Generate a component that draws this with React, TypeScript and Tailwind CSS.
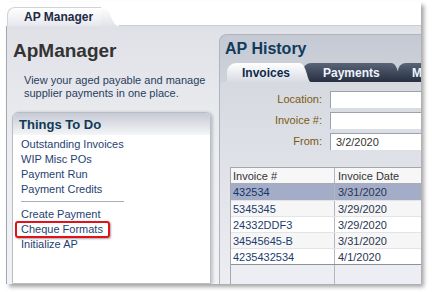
import React from "react";

const todo1 = ["Outstanding Invoices", "WIP Misc POs", "Payment Run", "Payment Credits"];

const invoices = [
  { no: "432534", date: "3/31/2020", selected: true },
  { no: "5345345", date: "3/29/2020", alt: true },
  { no: "24332DDF3", date: "3/29/2020" },
  { no: "34545645-B", date: "3/31/2020", alt: true },
  { no: "4235432534", date: "4/1/2020" },
];

function Curve({ id, from, to, w = 16 }: { id: string; from: string; to: string; w?: number }) {
  return (
    <svg width={w} height="19" viewBox={`0 0 ${w} 19`} className="block shrink-0">
      <defs>
        <linearGradient id={id} x1="0" y1="0" x2="0" y2="1">
          <stop offset="0" stopColor={from} />
          <stop offset="1" stopColor={to} />
        </linearGradient>
      </defs>
      <path d={`M0 0 L2 0 C10 0 10 19 ${w} 19 L0 19 Z`} fill={`url(#${id})`} />
    </svg>
  );
}

export default function App() {
  return (
    <div
      className="w-[432px] h-[292px] bg-white overflow-hidden pl-[6px] pt-[2px]"
      style={{ fontFamily: '"Liberation Sans", Arial, sans-serif' }}
    >
      <div className="w-[415px] h-[282px] flex flex-col bg-white shadow-[3px_3px_4px_rgba(0,0,0,0.35)] overflow-hidden">
        {/* top tab bar */}
        <div className="h-[24px] flex items-end shrink-0 pl-px">
          <div className="h-[19px] w-[94px] rounded-tl-[8px] bg-gradient-to-b from-white to-[#e6e8ed] border-t border-l border-[#d0d3da] flex items-center pl-[16px] text-[12px] font-bold text-[#1c2a44]">
            AP Manager
          </div>
          <Curve id="tabA" from="#ffffff" to="#e1e3e9" w={18} />
          <div className="flex-1 h-full border-b border-[#c9ccd3]" />
        </div>

        {/* main area */}
        <div className="flex-1 flex border-l border-[#a3a7b0] bg-gradient-to-b from-[#dfe1e7] via-[#eceef1] to-[#f1f2f5] min-h-0">
          {/* left panel */}
          <div className="w-[204px] shrink-0 flex flex-col pl-[5px] pt-[14px]">
            <h1 className="text-[19px] leading-[22px] font-bold text-[#333] pl-[1px]">ApManager</h1>
            <p className="mt-[12px] pl-[12px] text-[11px] leading-[13px] text-[#28405f]">
              View your aged payable and manage
              <br />
              supplier payments in one place.
            </p>
            <div className="mt-[12px] flex-1 flex flex-col rounded-t-[6px] border border-[#b9bdc6] bg-white shadow-[2px_0_3px_rgba(0,0,0,0.18)] overflow-hidden">
              <div className="h-[22px] pt-[1px] bg-gradient-to-b from-[#c6cad4] to-[#f5f6f8] pl-[6px] text-[13px] font-bold text-[#0e3a56] flex items-center">
                Things To Do
              </div>
              <div className="pl-[8px] pt-[2px] text-[11px] leading-[15px] text-[#1f3f72]">
                {todo1.map((t) => (
                  <div key={t}>{t}</div>
                ))}
                <div className="w-[103px] h-px bg-[#a9adb8] mt-[4px] mb-[5px]" />
                <div>Create Payment</div>
                <div className="relative">
                  Cheque Formats
                  <div className="absolute left-[-6px] top-[-1px] w-[95px] h-[17px] border-2 border-[#e2121a] rounded-[3px] shadow-[1px_1px_2px_rgba(0,0,0,0.35)]" />
                </div>
                <div>Initialize AP</div>
              </div>
            </div>
          </div>

          {/* right panel */}
          <div className="ml-[8px] mt-[8px] flex-1 min-w-0 flex flex-col rounded-tl-[8px] border-l border-t border-[#b0b4bd] bg-gradient-to-b from-[#c5c9d3] via-[#dfe2e8] to-[#eceef2] overflow-hidden">
            <h2 className="pl-[5px] pt-[4px] text-[16px] leading-[20px] font-bold text-[#103b5b]">AP History</h2>
            <div className="mt-[4px] pl-[7px] flex items-end h-[19px]">
              <div className="relative z-10 h-[19px] w-[70px] shrink-0 rounded-tl-[9px] bg-gradient-to-b from-white to-[#d8dbe2] flex items-center pl-[15px] text-[12px] font-bold text-[#0f2a4b]">
                Invoices
              </div>
              <div className="relative z-10">
                <Curve id="tabB" from="#ffffff" to="#d8dbe2" w={14} />
              </div>
              <div className="h-[19px] w-[86px] shrink-0 -ml-[8px] rounded-tl-[8px] bg-gradient-to-b from-[#5a6478] to-[#273040] flex items-center pl-[20px] text-[12px] font-bold text-[#eef3ff]">
                Payments
              </div>
              <Curve id="tabD" from="#5a6478" to="#273040" w={12} />
              <div className="h-[19px] flex-1 -ml-[3px] rounded-tl-[8px] bg-gradient-to-b from-[#5a6478] to-[#273040] text-[12px] font-bold text-[#eef3ff] pl-[14px] flex items-center overflow-hidden whitespace-nowrap">
                Misc
              </div>
            </div>

            <div className="bg-gradient-to-b from-[#d6d9e0] to-[#eceef2] pt-[7px] flex-1 flex flex-col">
              {[
                ["Location:", ""],
                ["Invoice #:", ""],
                ["From:", "3/2/2020"],
              ].map(([label, val]) => (
                <div key={label} className="flex items-center h-[20px] mb-px">
                  <div className="w-[110px] shrink-0 text-right text-[11px] text-[#7b5a12] pr-[8px]">{label}</div>
                  <div className="flex-1 h-[17px] bg-white border-t border-l border-[#9ca1ab] pl-[5px] text-[11px] leading-[16px] text-[#333]">
                    {val}
                  </div>
                </div>
              ))}

              <div className="mt-[15px] ml-[10px] flex-1 flex flex-col border-l border-t border-[#a3a7b0] bg-[#eceef3] text-[11px]">
                <div className="flex h-[16px] bg-[#f7f7f8] border-b border-[#a8acb4] text-[#333] leading-[16px]">
                  <div className="w-[104px] pl-[2px] border-r border-[#b3b7bf]">Invoice #</div>
                  <div className="flex-1 pl-[3px]">Invoice Date</div>
                </div>
                {invoices.map((r) => (
                  <div
                    key={r.no}
                    className={
                      "flex h-[16px] leading-[16px] text-[#1c3d6e] " +
                      (r.selected
                        ? "bg-[#a3adc8] text-[#173566]"
                        : r.alt
                        ? "bg-[#f6f6f6] border-t border-[#e4e4e6]"
                        : "bg-white border-t border-[#e4e4e6]")
                    }
                  >
                    <div className="w-[104px] pl-[2px] border-r border-[#b3b7bf]">{r.no}</div>
                    <div className="flex-1 pl-[3px] text-[#2a3550]">{r.date}</div>
                  </div>
                ))}
                <div className="flex-1 flex border-t border-[#8e929a]">
                  <div className="w-[104px] border-r border-[#b3b7bf]" />
                </div>
              </div>
            </div>
          </div>
        </div>
      </div>
    </div>
  );
}
